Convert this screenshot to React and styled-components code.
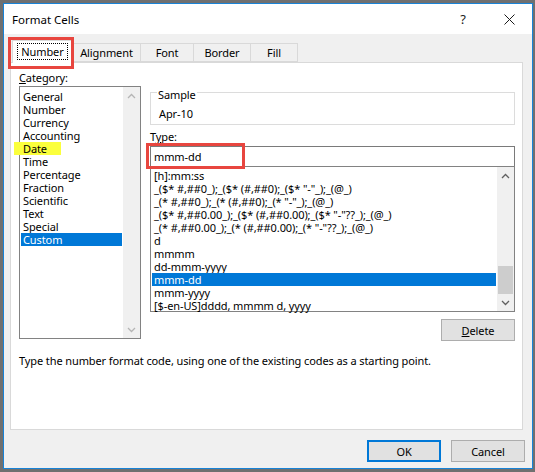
import React from 'react';
import styled, { createGlobalStyle } from 'styled-components';

const categories = [
    'General', 'Number', 'Currency', 'Accounting', 'Date', 'Time',
    'Percentage', 'Fraction', 'Scientific', 'Text', 'Special', 'Custom',
];

const formats = [
    '[h]:mm:ss',
    '_($* #,##0_);_($* (#,##0);_($* "-"_);_(@_)',
    '_(* #,##0_);_(* (#,##0);_(* "-"_);_(@_)',
    '_($* #,##0.00_);_($* (#,##0.00);_($* "-"??_);_(@_)',
    '_(* #,##0.00_);_(* (#,##0.00);_(* "-"??_);_(@_)',
    'd',
    'mmmm',
    'dd-mmm-yyyy',
    'mmm-dd',
    'mmm-yyyy',
    '[$-en-US]dddd, mmmm d, yyyy',
];

const tabs = [
    { title: 'Number', width: 61 },
    { title: 'Alignment', width: 69 },
    { title: 'Font', width: 54 },
    { title: 'Border', width: 58 },
    { title: 'Fill', width: 48 },
];

const Chevron = ({ up, color }) => (
    <svg width="9" height="6" viewBox="0 0 9 6">
        <polyline
            points={up ? '1,5 4.5,1.5 8,5' : '1,1 4.5,4.5 8,1'}
            fill="none"
            stroke={color}
            strokeWidth="1.3"
        />
    </svg>
);

const App = () => (
    <>
        <GlobalStyle />
        <Window>
            <TitleBar>
                <Title>Format Cells</Title>
                <TitleButton>?</TitleButton>
                <TitleButton>
                    <svg width="11" height="11" viewBox="0 0 11 11">
                        <path d="M0.5 0.5 L10.5 10.5 M10.5 0.5 L0.5 10.5" stroke="#1a1a1a" strokeWidth="1" />
                    </svg>
                </TitleButton>
            </TitleBar>
            <Body>
                <TabRow>
                    {tabs.map((t, i) => (
                        <Tab key={t.title} active={i === 0} width={t.width}>
                            {i === 0 ? <Focus>{t.title}</Focus> : t.title}
                        </Tab>
                    ))}
                    <RedMark style={{ left: -2, top: -3, width: 66, height: 32 }} />
                </TabRow>
                <Panel>
                    <Columns>
                        <LeftCol>
                            <Label><u>C</u>ategory:</Label>
                            <ListBox height={253}>
                                <Items top={3}>
                                    {categories.map((c) => (
                                        <Item key={c} selected={c === 'Custom'}>
                                            {c === 'Date' && <Highlight />}
                                            <span>{c}</span>
                                        </Item>
                                    ))}
                                </Items>
                                <ScrollBar>
                                    <ArrowBox><Chevron up color="#b5b5b5" /></ArrowBox>
                                    <Track />
                                    <ArrowBox><Chevron color="#b5b5b5" /></ArrowBox>
                                </ScrollBar>
                            </ListBox>
                        </LeftCol>
                        <RightCol>
                            <Group>
                                <Legend>Sample</Legend>
                                <SampleText>Apr-10</SampleText>
                            </Group>
                            <TypeLabel>T<u>y</u>pe:</TypeLabel>
                            <TypeField>
                                <TypeInput>mmm-dd</TypeInput>
                                <RedMark style={{ left: -4, top: -3, width: 99, height: 26 }} />
                            </TypeField>
                            <ListBox height={146}>
                                <Items top={2}>
                                    {formats.map((f) => (
                                        <Item key={f} selected={f === 'mmm-dd'}>
                                            <span>{f}</span>
                                        </Item>
                                    ))}
                                </Items>
                                <ScrollBar>
                                    <ArrowBox><Chevron up color="#606060" /></ArrowBox>
                                    <Track>
                                        <Thumb />
                                    </Track>
                                    <ArrowBox><Chevron color="#606060" /></ArrowBox>
                                </ScrollBar>
                            </ListBox>
                            <ButtonRow>
                                <Button><u>D</u>elete</Button>
                            </ButtonRow>
                        </RightCol>
                    </Columns>
                    <HelpText>Type the number format code, using one of the existing codes as a starting point.</HelpText>
                </Panel>
                <Footer>
                    <Button primary>OK</Button>
                    <Button>Cancel</Button>
                </Footer>
            </Body>
        </Window>
    </>
);

export default App;

/*
    Styles
*/
const GlobalStyle = createGlobalStyle`
    body {
        margin: 0;
        padding: 3px 2px 3px 3px;
        background: #707070;
        font-family: "Noto Sans", "Open Sans", sans-serif;
        font-size: 11px;
        letter-spacing: -0.1px;
        color: #000;
    }
`;

const Window = styled.div`
    box-sizing: border-box;
    width: 530px;
    height: 466px;
    border: 1px solid #1883d7;
    background: #f0f0f0;
    display: flex;
    flex-direction: column;
`;

const TitleBar = styled.div`
    height: 30px;
    background: #fff;
    display: flex;
    align-items: center;
    padding-left: 8px;
`;

const Title = styled.div`
    flex: 1;
    font-size: 11.5px;
    letter-spacing: 0;
`;

const TitleButton = styled.div`
    width: 46px;
    height: 30px;
    display: flex;
    align-items: center;
    justify-content: center;
    font-size: 13px;
    color: #1a1a1a;
`;

const Body = styled.div`
    padding: 6px 7px 0 6px;
`;

const TabRow = styled.div`
    position: relative;
    display: flex;
    align-items: flex-end;
    height: 22px;
    padding-left: 2px;
`;

const Tab = styled.div`
    box-sizing: border-box;
    width: ${p => p.width}px;
    height: ${p => (p.active ? '23px' : '19px')};
    margin-bottom: ${p => (p.active ? '-1px' : '0')};
    margin-left: ${p => (p.active ? '0' : '-1px')};
    padding-bottom: ${p => (p.active ? '2px' : '0')};
    display: flex;
    align-items: center;
    justify-content: center;
    background: ${p => (p.active ? '#fff' : '#f0f0f0')};
    border: 1px solid #d9d9d9;
    border-bottom: ${p => (p.active ? 'none' : '1px solid #d9d9d9')};
    position: relative;
    z-index: ${p => (p.active ? 1 : 0)};
`;

const Focus = styled.span`
    padding: 0 3px;
    outline: 1px dotted #000;
    line-height: 15px;
`;

const RedMark = styled.div`
    position: absolute;
    box-sizing: border-box;
    border: 3px solid #e8463f;
    z-index: 3;
    pointer-events: none;
`;

const Panel = styled.div`
    box-sizing: border-box;
    width: 513px;
    height: 368px;
    background: #fff;
    border: 1px solid #d9d9d9;
    padding: 7px 6px 0 8px;
`;

const Columns = styled.div`
    display: grid;
    grid-template-columns: 122px 365px;
    column-gap: 9px;
`;

const LeftCol = styled.div`
    display: flex;
    flex-direction: column;
`;

const RightCol = styled.div`
    display: flex;
    flex-direction: column;
    padding-top: 12px;
`;

const Label = styled.div`
    line-height: 16px;
    height: 16px;
`;

const TypeLabel = styled(Label)`
    margin-top: 4px;
`;

const ListBox = styled.div`
    box-sizing: border-box;
    height: ${p => p.height}px;
    border: 1px solid #828282;
    display: flex;
    background: #fff;
`;

const Items = styled.div`
    flex: 1;
    min-width: 0;
    padding: ${p => p.top}px 1px 0 1px;
`;

const Item = styled.div`
    position: relative;
    height: 13px;
    line-height: 13px;
    padding-left: 2px;
    white-space: nowrap;
    background: ${p => (p.selected ? '#0078d7' : 'transparent')};
    color: ${p => (p.selected ? '#fff' : '#000')};

    span {
        position: relative;
    }
`;

const Highlight = styled.div`
    position: absolute;
    left: -7px;
    top: 0;
    width: 47px;
    height: 13px;
    background: #fbff3c;
`;

const ScrollBar = styled.div`
    width: 17px;
    background: #f0f0f0;
    display: flex;
    flex-direction: column;
`;

const ArrowBox = styled.div`
    height: 17px;
    display: flex;
    align-items: center;
    justify-content: center;
`;

const Track = styled.div`
    flex: 1;
    position: relative;
`;

const Thumb = styled.div`
    position: absolute;
    left: 1px;
    right: 1px;
    bottom: 0;
    height: 28px;
    background: #cdcdcd;
`;

const Group = styled.fieldset`
    margin: 0;
    padding: 4px 7px 2px 8px;
    border: 1px solid #dcdcdc;
    min-inline-size: 0;
`;

const Legend = styled.legend`
    padding: 6px 1px 0 1px;
    margin-left: -2px;
    line-height: 14px;
`;

const SampleText = styled.div`
    line-height: 16px;
`;

const TypeField = styled.div`
    position: relative;
    margin-top: 1px;
`;

const TypeInput = styled.div`
    box-sizing: border-box;
    height: 20px;
    border: 1px solid #7a7a7a;
    border-bottom: none;
    padding-left: 3px;
    line-height: 19px;
`;

const ButtonRow = styled.div`
    display: flex;
    justify-content: flex-end;
    margin-top: 7px;
`;

const Button = styled.div`
    box-sizing: border-box;
    width: 74px;
    height: 22px;
    display: flex;
    align-items: center;
    justify-content: center;
    background: #e1e1e1;
    border: ${p => (p.primary ? '2px solid #0078d7' : '1px solid #adadad')};
`;

const HelpText = styled.div`
    margin-top: 12px;
    line-height: 16px;
`;

const Footer = styled.div`
    display: flex;
    justify-content: flex-end;
    gap: 10px;
    margin-top: 10px;
`;
